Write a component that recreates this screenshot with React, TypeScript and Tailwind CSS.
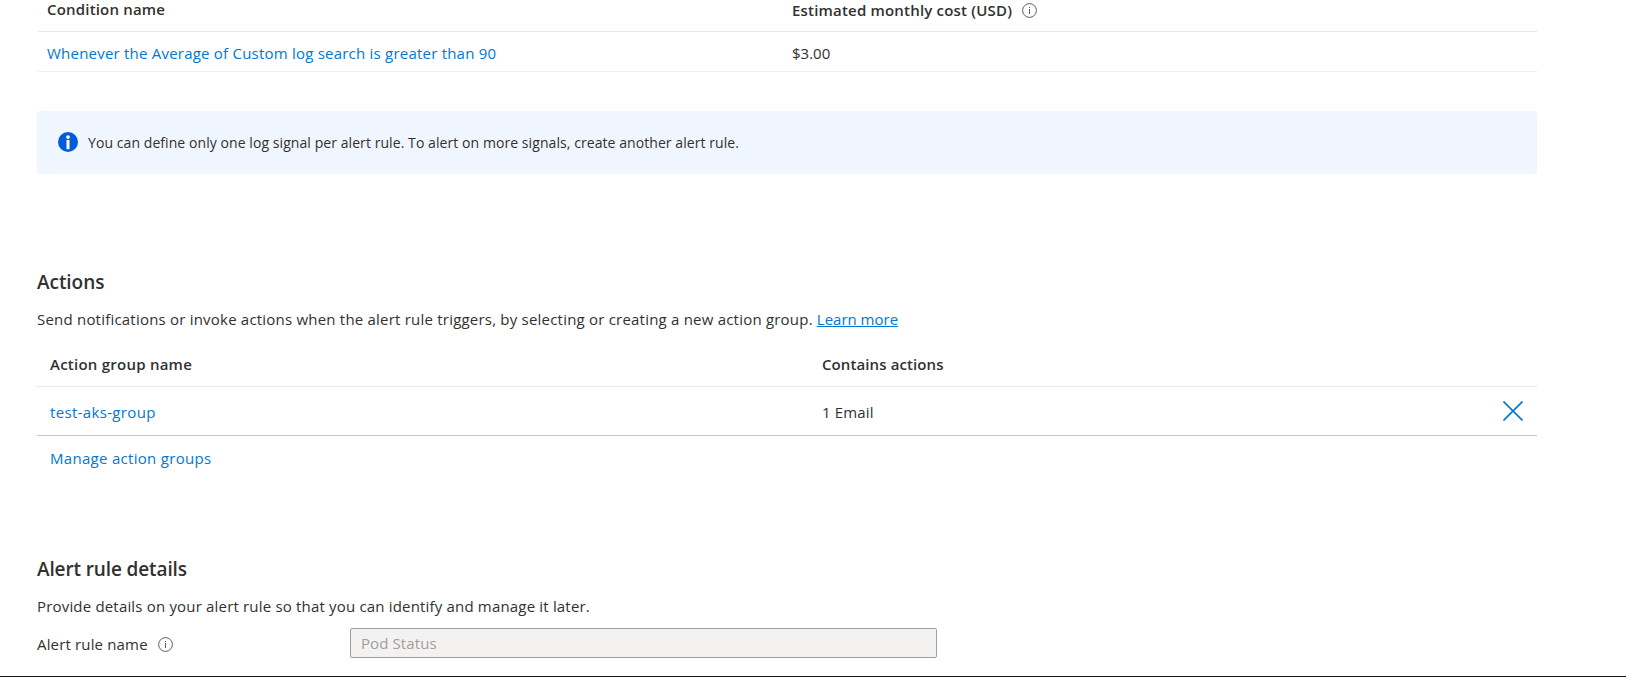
import type { ReactNode } from "react";

function InfoOutline({ className }: { className: string }) {
  return (
    <svg viewBox="0 0 15 15" className={`size-[15px] shrink-0 ${className}`} fill="none" aria-hidden="true">
      <circle cx="7.5" cy="7.5" r="6.9" stroke="#605e5c" strokeWidth="1" />
      <path d="M7.5 6V11" stroke="#605e5c" strokeWidth="1" />
      <path d="M7.5 4V5" stroke="#605e5c" strokeWidth="1" />
    </svg>
  );
}

function InfoFilled() {
  return (
    <svg viewBox="0 0 20 20" className="size-5 shrink-0" aria-hidden="true">
      <circle cx="10" cy="10" r="10" fill="#015cda" />
      <circle cx="10" cy="5.1" r="1.9" fill="#fff" />
      <rect x="8.5" y="8" width="3" height="9.2" fill="#fff" />
    </svg>
  );
}

function Link({ children, className }: { children: ReactNode; className: string }) {
  return <a href="#" className={`text-[#0078d4] ${className}`}>{children}</a>;
}

function Conditions() {
  return (
    <section>
      <div className="flex h-8 border-b border-[#e9e9e9] pl-[10px] font-semibold leading-[18px]">
        <div className="w-[745px] tracking-[0.185px]">Condition name</div>
        <div className="flex items-start">
          <span className="pt-px tracking-[0.19px]">Estimated monthly cost (USD)</span>
          <InfoOutline className="ml-[10px] mt-[3px]" />
        </div>
      </div>
      <div className="flex h-10 border-b border-[#f0f0f0] pl-[10px] pt-[11px]">
        <div className="w-[745px]">
          <Link className="tracking-[0.22px]">Whenever the Average of Custom log search is greater than 90</Link>
        </div>
        <div>$3.00</div>
      </div>
      <div className="mt-[39px] flex h-[63px] items-center gap-[10px] rounded-[2px] bg-[#eff6ff] pb-px pl-[21px]">
        <InfoFilled />
        <span className="pt-[2px] text-sm tracking-[0.071px]">
          You can define only one log signal per alert rule. To alert on more signals, create another alert rule.
        </span>
      </div>
    </section>
  );
}

function Actions() {
  return (
    <section className="mt-24">
      <h2 className="text-[19px] font-semibold leading-6 tracking-[-0.05px]">Actions</h2>
      <p className="mt-[15px] flex">
        <span className="tracking-[0.21px]">
          Send notifications or invoke actions when the alert rule triggers, by selecting or creating a new action group.
        </span>
        <Link className="ml-[4px] underline">Learn more</Link>
      </p>
      <div className="mt-[13px] flex border-b border-[#e9e9e9] py-3 pl-[13px] font-semibold">
        <div className="w-[772px] tracking-[0.24px]">Action group name</div>
        <div className="tracking-[0.1px]">Contains actions</div>
      </div>
      <div className="flex h-[49px] border-b border-[#c8c6c4] pl-[13px] pr-[14px] pt-[15px]">
        <div className="w-[772px]">
          <Link className="tracking-[0.34px]">test-aks-group</Link>
        </div>
        <div className="flex-1 tracking-[0.14px]">1 Email</div>
        <button type="button" aria-label="Remove" className="-mt-px size-5">
          <svg viewBox="0 0 20 20" className="size-5" fill="none" aria-hidden="true">
            <path d="M0.5 0.5L19.5 19.5M19.5 0.5L0.5 19.5" stroke="#0078d4" strokeWidth="1.6" />
          </svg>
        </button>
      </div>
      <div className="mt-3 pl-[13px]">
        <Link className="tracking-[0.3px]">Manage action groups</Link>
      </div>
    </section>
  );
}

function Details() {
  return (
    <section className="mt-[89px]">
      <h2 className="text-[19px] font-semibold leading-6 tracking-[-0.12px]">Alert rule details</h2>
      <p className="mt-[15px] tracking-[0.18px]">
        Provide details on your alert rule so that you can identify and manage it later.
      </p>
      <div className="mt-3 flex h-[30px] items-center">
        <label htmlFor="rule-name" className="flex w-[313px] items-center pt-[2px]">
          <span className="tracking-[0.16px]">Alert rule name</span>
          <InfoOutline className="ml-[10px]" />
        </label>
        <input
          id="rule-name"
          disabled
          defaultValue="Pod Status"
          className="h-[30px] w-[587px] rounded-[2px] border border-[#a19f9d] bg-[#f3f2f1] px-[10px] tracking-[0.1px] text-[#a19f9d]"
        />
      </div>
    </section>
  );
}

export default function App() {
  return (
    <div className="flex h-[677px] flex-col overflow-hidden border-b border-[#15131f] bg-white font-['Open_Sans','Noto_Sans',sans-serif] text-[15px] leading-5 text-[#323130]">
      <main className="ml-[37px] w-[1500px] whitespace-nowrap">
        <Conditions />
        <Actions />
        <Details />
      </main>
    </div>
  );
}
